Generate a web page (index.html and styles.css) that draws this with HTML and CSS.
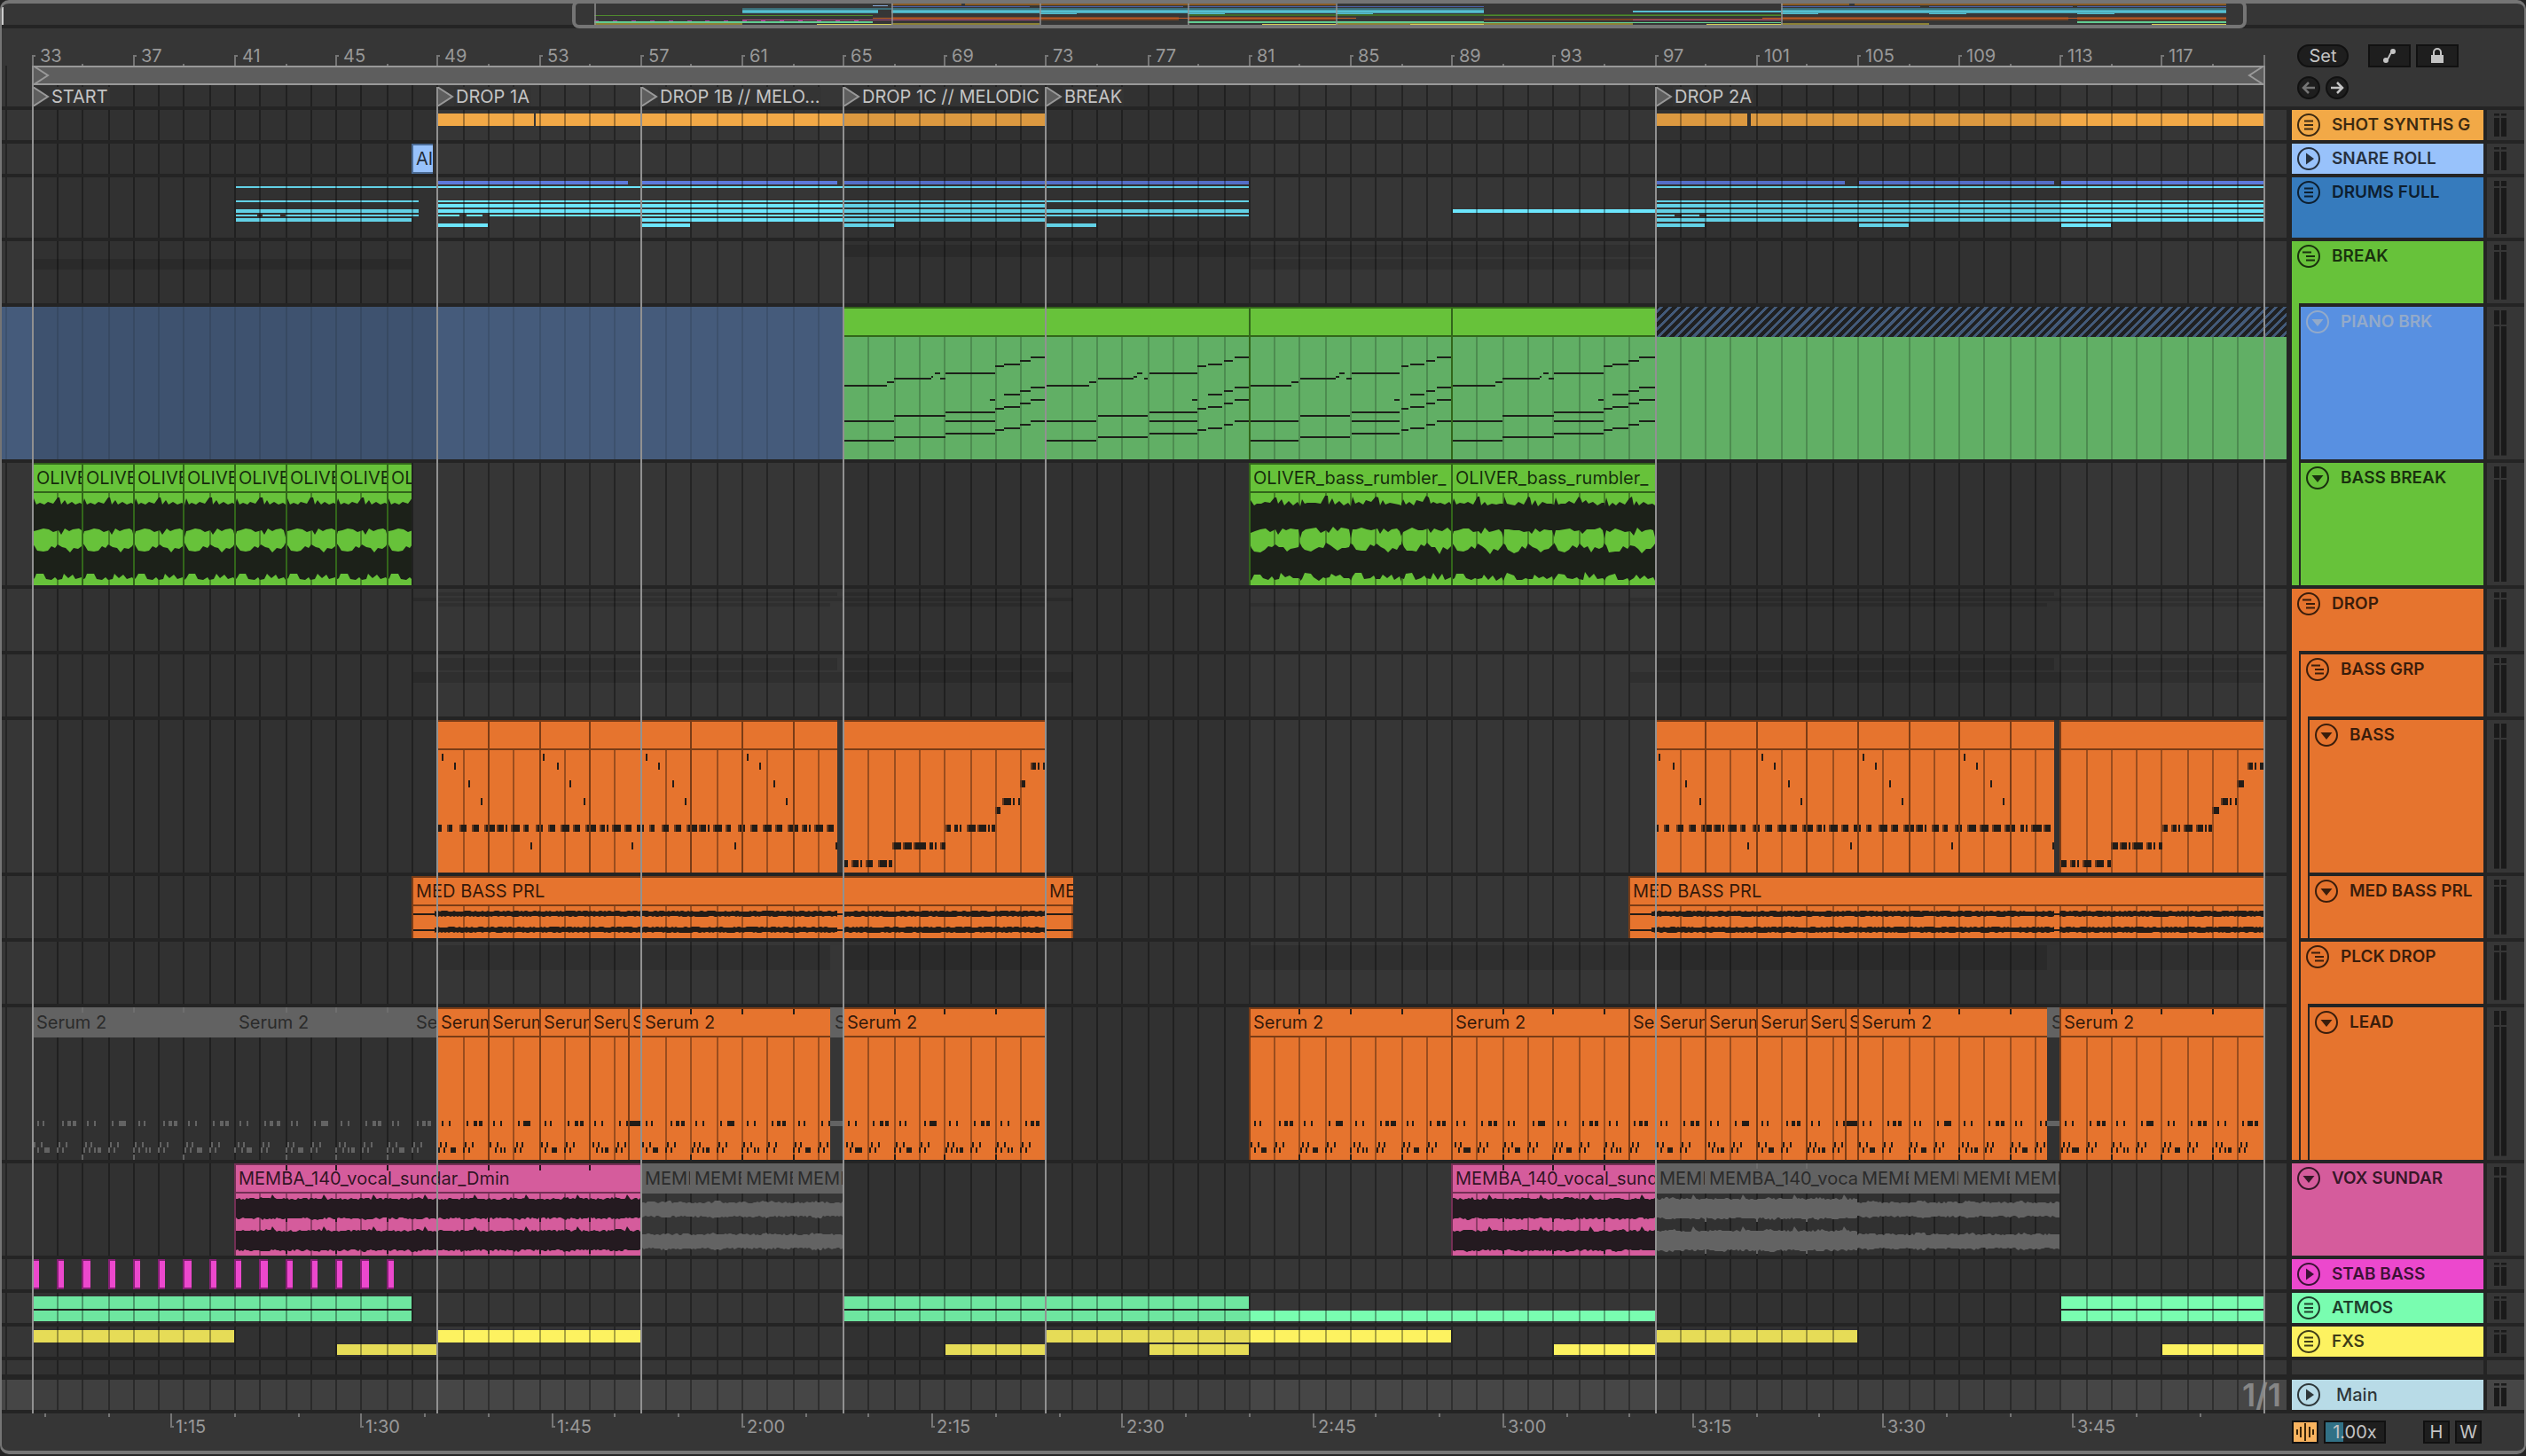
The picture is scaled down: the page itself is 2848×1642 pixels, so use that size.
FILE: index.html
```
<!DOCTYPE html>
<html lang="en">

<head>
    <meta charset="UTF-8">
    <meta name="viewport" content="width=device-width, initial-scale=1.0">
    <link rel="stylesheet" href="styles.css">
    <title>Arrangement</title>
</head>

<body>
    <main class="app">
        <div class="overview" id="overview"></div>

        <div class="top">
            <div class="timeline">
                <div class="ruler" id="ruler"></div>
                <div class="lane loop" id="loop"></div>
                <div class="lane locators" id="locators"></div>
            </div>
            <div class="tools">
                <div class="tool-row">
                    <button type="button" class="pill">Set</button>
                    <button type="button" class="square first" aria-label="Automation mode">
                        <svg width="20" height="20" viewBox="0 0 20 20">
                            <path d="M5 15 C11 15 9 5 15 5" fill="none" stroke="#c4c4c4" stroke-width="2" />
                            <circle cx="6" cy="15" r="3" fill="#c4c4c4" />
                            <circle cx="14" cy="5" r="3" fill="#c4c4c4" />
                        </svg>
                    </button>
                    <button type="button" class="square" aria-label="Lock envelopes">
                        <svg width="20" height="20" viewBox="0 0 20 20">
                            <path d="M6 9 V6 a4 4 0 0 1 8 0 V9" fill="none" stroke="#c4c4c4" stroke-width="2" />
                            <rect x="3" y="9" width="14" height="9" fill="#c4c4c4" />
                        </svg>
                    </button>
                </div>
                <div class="tool-row">
                    <button type="button" class="round off" aria-label="Previous locator">
                        <svg width="18" height="18" viewBox="0 0 18 18">
                            <path d="M16 9 H4 M9 3 L3 9 L9 15" fill="none" stroke="currentColor" stroke-width="2.5" />
                        </svg>
                    </button>
                    <button type="button" class="round" aria-label="Next locator">
                        <svg width="18" height="18" viewBox="0 0 18 18">
                            <path d="M2 9 H14 M9 3 L15 9 L9 15" fill="none" stroke="currentColor" stroke-width="2.5" />
                        </svg>
                    </button>
                </div>
            </div>
        </div>

        <div class="tracks" id="tracks"></div>

        <div class="bottom">
            <div class="times" id="times"></div>
            <div class="zoom">
                <button type="button" class="follow" aria-label="Waveform view">
                    <svg width="26" height="22" viewBox="0 0 26 22">
                        <path d="M4 8 V14 M8 5 V17 M13 1 V21 M18 5 V17 M22 8 V14" stroke="#3a2508" stroke-width="2" />
                    </svg>
                </button>
                <input class="scale" type="text" value="1.00x" aria-label="Waveform zoom">
                <button type="button" class="key first">H</button>
                <button type="button" class="key">W</button>
            </div>
        </div>

        <div class="markers" id="markers"></div>
    </main>

    <script src="script.js"></script>
</body>

</html>
```

FILE: styles.css
```
* {
    box-sizing: border-box;
}

body {
    margin: 0;
    background: #242424;
    color: #989898;
    font-family: Inter, "Liberation Sans", sans-serif;
    font-size: 20px;
}

svg {
    display: block;
}

button,
input {
    font-family: inherit;
    font-size: 20px;
    color: #c4c4c4;
    background: #1e1e1e;
    border: 2px solid #111;
    padding: 0;
    display: flex;
    align-items: center;
    justify-content: center;
}

.app {
    position: relative;
    background: #363636;
    border: solid #757575;
    border-width: 4px 2px;
    border-radius: 10px;
    margin-bottom: 2px;
    overflow: hidden;
}

/* song overview */
.overview {
    position: relative;
    height: 28px;
    border-bottom: 4px solid #242424;
}

.overview::before {
    content: "";
    position: absolute;
    left: 0;
    top: 4px;
    bottom: 0;
    width: 2px;
    background: #ccc;
}

.view-frame {
    position: absolute;
    top: -4px;
    bottom: -4px;
    border: 4px solid #757575;
    border-radius: 8px;
}

/* ruler, loop brace, locators */
.top,
.bottom {
    display: flex;
}

.timeline,
.times {
    flex: 1;
    min-width: 0;
    position: relative;
}

.ruler {
    position: relative;
    height: 42px;
}

.tick-label {
    position: absolute;
    line-height: 20px;
    white-space: nowrap;
}

.ruler .tick-label {
    top: 21px;
}

.times .tick-label {
    top: 5px;
}

.loop {
    height: 22px;
}

.loop-brace {
    position: absolute;
    top: 0;
    bottom: 0;
    background: #5e5e5e;
    border: solid #999;
    border-width: 2px 0;
    display: flex;
    justify-content: space-between;
}

.loop-brace svg {
    margin-top: -2px;
}

.locators {
    height: 24px;
}

.locator {
    position: absolute;
    top: 2px;
    display: flex;
    color: #c4c4c4;
    line-height: 22px;
    white-space: nowrap;
}

.locator span {
    padding: 0 2px;
    background: #343434;
}

.tools,
.zoom {
    width: 268px;
}

.tools {
    padding: 18px 0 0 12px;
}

.tool-row {
    display: flex;
    gap: 6px;
}

.tool-row + .tool-row {
    margin-top: 10px;
}

.pill {
    width: 58px;
    height: 26px;
    border-radius: 13px;
}

.square {
    width: 48px;
    height: 26px;
}

.square.first {
    margin-left: 16px;
}

.round {
    width: 26px;
    height: 26px;
    border-radius: 13px;
}

.off {
    color: #757575;
}

/* track rows */
.track {
    display: flex;
    background: #242424;
}

.lane {
    position: relative;
    flex: 1;
    min-width: 0;
    overflow: hidden;
    background: #363636;
}

.track .lane {
    margin-top: 4px;
}

.grid {
    position: absolute;
    left: 0;
    top: 0;
}

.head-col {
    display: flex;
    width: 216px;
    margin-left: 6px;
}

.strip {
    width: 8px;
    margin-right: 2px;
}

.head {
    flex: 1;
    display: flex;
    align-items: flex-start;
    gap: 13px;
    margin-top: 4px;
    padding: 4px 6px;
    color: rgba(0, 0, 0, 0.75);
    font-size: 19px;
    font-weight: 600;
    line-height: 26px;
    white-space: nowrap;
}

.head.dim {
    color: #93aac9;
}

.head.plain {
    gap: 18px;
    font-size: 20px;
    font-weight: 500;
}

.meter {
    display: flex;
    gap: 2px;
    width: 42px;
    margin: 4px 0 0 4px;
    padding: 4px 8px;
    background: #363636;
}

.meter i {
    width: 6px;
    background: linear-gradient(#1a1a1a, #1a1a1a) 0 0 / 6px 10% no-repeat, linear-gradient(#1a1a1a, #1a1a1a) 0 100% / 6px calc(90% - 2px) no-repeat;
}

.main-track {
    padding-top: 2px;
}

.main-track .lane,
.main-track .meter {
    background: #464646;
}

.frozen {
    background: #455b7b;
}

.quantize {
    position: absolute;
    right: 6px;
    top: 0;
    font-size: 36px;
    font-weight: 600;
    line-height: 34px;
    color: #868686;
}

/* clips */
.clip {
    position: absolute;
    top: 0;
    bottom: 0;
    overflow: hidden;
    background: var(--fill);
    border: solid var(--edge);
    border-width: 2px 0 0 2px;
}

.clip .name {
    position: relative;
    height: 32px;
    padding-left: 3px;
    border-bottom: 2px solid var(--edge);
    color: rgba(0, 0, 0, 0.78);
    line-height: 30px;
    white-space: nowrap;
    overflow: hidden;
}

.clip .name svg {
    position: absolute;
    left: 0;
    top: 0;
}

.clip .body {
    margin-left: -2px;
}

.green {
    --fill: #67c23a;
    --edge: #32661a;
    --ink: #1c2119;
}

.orange {
    --fill: #e6742e;
    --edge: #7a3c16;
    --ink: #231c17;
}

.pink {
    --fill: #d55c9c;
    --edge: #742f55;
    --ink: #241a20;
}

.muted {
    --fill: transparent;
    --edge: transparent;
    --ink: #636363;
    border-width: 0;
}

.muted .name {
    height: 34px;
    line-height: 34px;
    padding-left: 5px;
    background: #626262;
    border: 0;
    color: #2b2b2b;
}

.muted .body {
    margin-left: 0;
}

.snare {
    --fill: #98c2fb;
    --edge: #4b6b95;
    border-width: 2px 0 2px 2px;
}

.snare .name {
    border: 0;
}

.stab {
    --fill: #ec48cd;
    --edge: #861f75;
    border-width: 2px 0 2px 2px;
}

.midi-frozen .body {
    background: #61af65;
}

.hatch {
    position: absolute;
    top: 0;
    height: 34px;
    background: repeating-linear-gradient(135deg, #1f2021 0 4px, #435a79 4px 7px);
}

/* marker lines over all the lanes */
.markers {
    position: absolute;
    top: 0;
    left: 0;
    right: 268px;
    bottom: 42px;
    pointer-events: none;
}

.markers i {
    position: absolute;
    top: 94px;
    bottom: 0;
    width: 2px;
    background: #919191;
}

.markers .edge {
    top: 70px;
}

/* footer */
.bottom {
    height: 46px;
    border-top: 4px solid #242424;
}

.zoom {
    display: flex;
    gap: 6px;
    padding: 8px 0 0 6px;
}

.follow {
    width: 30px;
    height: 26px;
    background: #f8b35f;
}

.scale {
    width: 70px;
    height: 26px;
    text-align: center;
    background: linear-gradient(#317186, #317186) 0 0 / 20px 100% no-repeat #1e1e1e;
}

.key {
    width: 30px;
    height: 26px;
}

.key.first {
    margin-left: 36px;
}
```

FILE: script.js
```
const FIRST_BAR = 31.8;
const BARS = 90.1;
const SAMPLE = "OLIVER_bass_rumbler_";
const VOX = "MEMBA_140_vocal_sundar_Dmin";
let laneWidth = 0;

// bar number to x, kept on the 2px grid
function x(bar) {
    return Math.floor((bar - FIRST_BAR) * laneWidth / BARS / 2) * 2;
}

function rect(left, top, w, h, fill) {
    return `<rect x="${left}" y="${top}" width="${w}" height="${h}" fill="${fill}"/>`;
}

function svg(w, h, inner, cls) {
    return `<svg class="${cls || ""}" width="${w}" height="${h}">${inner}</svg>`;
}

function rand(n) {
    const v = Math.sin(n * 127.1) * 43758.5453;
    return v - Math.floor(v);
}

function gridLines(from, to, h, alpha, origin) {
    let out = "";
    for (let b = Math.ceil(from); b < to; b++) {
        out += rect(x(b) - origin, 0, 2, h, `rgba(0,0,0,${alpha})`);
    }
    return out;
}

// every other block of 16 bars is darker
function shade(h) {
    return [[33, 49], [65, 81], [97, 113]].map(s => rect(x(s[0]), 0, x(s[1]) - x(s[0]), h, "rgba(0,0,0,.09)")).join("");
}

function laneGrid(h, rows, alpha) {
    let out = "";
    (rows || []).forEach(r => {
        r.spans.forEach(s => {
            const left = x(s[0]) + (Number.isInteger(s[0]) ? 2 : 0);
            out += rect(left, r.y, x(s[1]) - left, r.h, r.color);
        });
    });
    return svg(laneWidth, h, out + shade(h) + gridLines(32, 122, h, alpha || 0.33, 0), "grid");
}

/* ---------- notes ---------- */

const pianoNotes = [
    [0, 80, 315], [80, 93, 303], [95, 162, 291], [162, 167, 285], [168, 178, 273], [180, 189, 291], [190, 279, 273],
    [281, 296, 249], [298, 325, 243], [327, 345, 231], [347, 375, 219],
    [270, 279, 363], [298, 325, 345], [327, 345, 333], [347, 375, 321],
    [281, 296, 393], [298, 325, 387], [327, 345, 375], [347, 375, 363],
    [95, 188, 417], [190, 279, 405], [0, 93, 435], [190, 279, 435],
    [281, 296, 465], [298, 325, 459], [327, 345, 447], [347, 375, 435],
    [0, 93, 501], [95, 188, 489], [190, 279, 477]
];

const bassRiff = [
    [0, 10], [21, 33], [49, 65], [76, 92], [104, 127], [131, 147], [150, 154], [163, 182], [190, 202], [217, 233],
    [245, 261], [272, 292], [300, 316], [327, 350], [359, 370], [374, 378], [386, 406], [413, 429], [441, 450]
];

const bassClimb = {
    124: [[0, 13], [21, 33], [37, 41], [49, 68], [76, 96], [103, 111]],
    104: [[111, 127], [131, 147], [150, 154], [158, 182], [190, 201], [205, 209], [217, 225]],
    84: [[225, 237], [245, 256], [260, 264], [273, 292], [299, 315], [319, 323], [327, 335]],
    64: [[335, 350]],
    54: [[354, 370], [374, 378], [386, 390]],
    34: [[391, 405]],
    14: [[413, 426], [429, 433], [441, 449]]
};

function note(bar, endBar, y, h, origin) {
    const left = x(bar);
    const w = Math.max(2, x(endBar) - left);
    let out = rect(left - origin, y, w, h, "var(--ink)");
    if (w > 4 && h === 8) {
        out += rect(left - origin, y, 2, h, "#6b391c");
    }
    return out;
}

function pianoBody(c, o) {
    let out = gridLines(c.s, c.e, 138, 0.2, o);
    for (let b = c.s; b < c.e; b += 8) {
        pianoNotes.forEach(n => {
            out += rect(x(b + n[0] / 46.7) - o, n[2] / 3 - 51, x(b + n[1] / 46.7) - x(b + n[0] / 46.7), 2, "#1c2119");
        });
    }
    return out;
}

function bassBody(c, o) {
    let out = gridLines(c.s + 1, c.e, 138, 0.33, o);
    if (c.climb) {
        Object.keys(bassClimb).forEach(y => {
            bassClimb[y].forEach(n => out += note(c.s + n[0] / 56, c.s + n[1] / 56, Number(y), 8, o));
        });
        return out;
    }
    const start = c.s - (c.s - 1) % 8;
    bassRiff.forEach(n => out += note(start + n[0] / 56, start + n[1] / 56, 84, 8, o));
    [start, start + 4].forEach(b => {
        [[0.2, 4], [0.7, 14], [1.25, 34], [1.75, 54], [3.7, 104]].forEach(n => {
            out += note(b + n[0], b + n[0], n[1], 8, o);
        });
    });
    return out;
}

function leadBody(c, o) {
    let out = c.muted ? "" : gridLines(c.s + 0.5, c.e, 138, 0.33, o);
    if (c.hold) {
        return out + rect(0, 94, 20, 6, "var(--ink)");
    }
    for (let b = Math.floor(c.s) - (Math.floor(c.s) - 1) % 2; b < c.e; b += 2) {
        const tail = (b - 1) % 8 === 2 ? [[80, 96]] : [[80, 88], [92, 100]];
        const low = (b - 1) % 8 === 0 ? [[28, 41]] : [[28, 32], [34, 41]];
        [[12, 15], [26, 30], [66, 69]].concat(tail).forEach(n => out += note(b + n[0] / 56, b + n[1] / 56, 94, 6, o));
        [[6, 9], [19, 22], [61, 64], [76, 79]].forEach(n => out += note(b + n[0] / 56, b + n[1] / 56, 118, 6, o));
        [[1, 4], [14, 17], [57, 60], [69, 72]].concat(low).forEach(n => out += note(b + n[0] / 56, b + n[1] / 56, 124, 6, o));
        if (c.e - c.s > 3 && b > c.s) {
            out += rect(x(b) - o, 132, 2, 6, "var(--ink)");
        }
    }
    return out;
}

/* ---------- waveforms ---------- */

const swell = {
    top1: [0, 14, 3, 6, 8, 13, 14, 11, 22, 13, 28, 10, 38, 12, 46, 5, 50, 5, 53, 13, 59, 8, 64, 13, 72, 10, 80, 13, 88, 11, 93, 13],
    low1: [0, 50, 3, 43, 10, 42, 20, 40, 30, 41, 38, 44, 48, 42, 53, 47, 60, 40, 68, 43, 75, 41, 85, 40, 90, 42, 93, 50],
    top2: [0, 56, 4, 60, 9, 65, 20, 66, 28, 65, 35, 60, 42, 62, 47, 58, 55, 61, 62, 62, 69, 67, 76, 62, 84, 63, 90, 60, 93, 56],
    low2: [0, 98, 4, 96, 8, 91, 20, 91, 25, 97, 35, 98, 42, 95, 46, 98, 54, 97, 58, 91, 66, 96, 74, 92, 80, 97, 90, 95, 93, 98]
};

function swellEdge(list, from, to, o, rough) {
    const pts = [];
    for (let b = from; b < to; b += 2) {
        for (let i = 0; i < list.length; i += 2) {
            const bar = Math.min(b + list[i] / 46.5, to);
            const jag = rough ? Math.round(rand(b * 31 + i) * 4 - 2) : 0;
            pts.push((Math.round((bar - FIRST_BAR) * laneWidth / BARS) - o) + "," + (list[i + 1] + jag));
            if (bar === to) {
                break;
            }
        }
    }
    return pts;
}

function swellBody(c, o) {
    const rough = c.e - c.s > 3;
    let out = gridLines(c.s + 1, c.e, 104, 0.33, o);
    [["top1", "low1"], ["top2", "low2"]].forEach(p => {
        const pts = swellEdge(swell[p[0]], c.s, c.e, o, rough).concat(swellEdge(swell[p[1]], c.s, c.e, o, rough).reverse());
        out += `<polygon points="${pts.join(" ")}" fill="var(--ink)"/>`;
    });
    return out;
}

function noisy(from, to, top, low, jag, o, seed) {
    const a = [];
    const b = [];
    for (let px = from; px <= to; px += 2) {
        const bump = jag > 1 && Math.sin(px / 9) > 0.8 ? 1 : 0;
        a.push((px - o) + "," + (top - Math.round(rand(px + seed) * jag) - bump));
        b.unshift((px - o) + "," + (low + Math.round(rand(px + seed + 7) * jag) + bump));
    }
    return `<polygon points="${a.concat(b).join(" ")}" fill="var(--ink)"/>`;
}

function voxBody(c, o) {
    let out = c.muted ? "" : gridLines(c.s + 1, c.e, 70, 0.33, o);
    const thin = c.thin ? 4 : 0;
    [0, 36].forEach(y => {
        out += noisy(x(c.s), x(c.e), y + 7 + thin, y + 27 - thin / 2, 2, o, y);
    });
    // consonant spikes just before each second bar
    for (let b = c.s; b < c.e && !c.thin; b += 2) {
        [0, 36].forEach(y => {
            const p = x(b + 1.4) - o;
            out += `<polygon points="${p},${y + 8} ${p + 3},${y + 1} ${p + 8},${y + 8}" fill="var(--ink)"/>`;
            out += rect(x(b) - o, y + 26, 2, 6, "var(--ink)");
        });
    }
    return out;
}

function medBody(c, o) {
    let out = gridLines(c.s + 1, c.e, 36, 0.33, o);
    [8, 26].forEach(y => {
        out += rect(0, y, x(c.e) - o, 2, "var(--ink)");
        c.wave.forEach(s => out += noisy(x(s[0]), x(s[1]), y - 2, y + 3, 1, o, y));
    });
    return out;
}

/* ---------- clips ---------- */

function clip(c, track) {
    const left = x(c.s);
    const w = x(c.e) - left;
    const color = c.muted ? "muted" : track.clipColor;
    const bodyH = track.h - 34;
    let ticks = "";
    if (c.ticks) {
        for (let b = c.s + 2; b < c.e; b += 2) {
            ticks += rect(x(b) - left - (c.muted ? 0 : 2), 0, 2, 6, c.muted ? "#6e6e6e" : "var(--ink)");
        }
    }
    let html = `<div class="clip ${color} ${track.extra || ""}" style="left:${left}px;width:${w}px">`;
    if (track.body || c.name) {
        html += `<div class="name">${ticks ? svg(w, 30, ticks) : ""}${c.name || ""}</div>`;
    }
    if (track.body) {
        html += svg(w, bodyH, track.body(c, left), "body");
    }
    return html + "</div>";
}

function bassClips(s) {
    const list = [];
    for (let b = s; b < s + 16; b += 2) {
        list.push({ s: b, e: Math.min(b + 2, s + 15.75) });
    }
    list.push({ s: s + 16, e: s + 24, climb: true });
    return list;
}

function leadClips(s) {
    const n = "Serum 2";
    return [
        { s: s, e: s + 2, name: n }, { s: s + 2, e: s + 4, name: n }, { s: s + 4, e: s + 6, name: n },
        { s: s + 6, e: s + 7.5, name: n }, { s: s + 7.5, e: s + 8, name: n, hold: true },
        { s: s + 8, e: s + 15.5, name: n, ticks: true }, { s: s + 15.5, e: s + 16, name: n, muted: true, hold: true },
        { s: s + 16, e: s + 24, name: n, ticks: true }
    ];
}

function twoBarClips(from, to, props) {
    const list = [];
    for (let b = from; b < to; b += 2) {
        list.push(Object.assign({ s: b, e: Math.min(b + 2, to) }, props));
    }
    return list;
}

const GHOST = "rgba(0,0,0,.13)";
const CYAN = "#6ce6fd";

const tracks = [
    {
        name: "SHOT SYNTHS G", icon: "group", color: "#f2a947", h: 34,
        rows: [{ y: 4, h: 14, color: "#f2a947", spans: [[49, 52.8], [52.9, 73], [97, 100.7], [100.8, 121]] }]
    },
    { name: "SNARE ROLL", icon: "play", color: "#98c2fb", h: 34, clipColor: "snare", clips: [{ s: 48, e: 48.85, name: "AI" }] },
    {
        name: "DRUMS FULL", icon: "group", color: "#367bbd", h: 68,
        rows: [
            { y: 4, h: 4, color: "#5d79dc", spans: [[49, 56.5], [57, 64.75], [65, 81], [97, 104.5], [105, 112.75], [113, 121]] },
            { y: 10, h: 2, color: CYAN, spans: [[41, 81], [97, 121]] },
            { y: 26, h: 2, color: CYAN, spans: [[41, 48.3], [49, 81], [97, 121]] },
            { y: 30, h: 4, color: CYAN, spans: [[49, 73], [97, 121]] },
            { y: 36, h: 4, color: CYAN, spans: [[41, 48.3], [49, 81], [89, 121]] },
            { y: 42, h: 2, color: CYAN, spans: [[41, 41.9], [42.1, 42.8], [43.05, 48.3], [49, 49.9], [50.15, 50.8], [51, 81], [97, 97.8], [98.1, 98.8], [99, 121]] },
            { y: 46, h: 4, color: CYAN, spans: [[41, 48], [57, 73], [97, 121]] },
            { y: 52, h: 4, color: CYAN, spans: [[49, 51], [57, 59], [65, 67], [73, 75], [97, 99], [105, 107], [113, 115]] }
        ]
    },
    {
        name: "BREAK", icon: "fold", color: "#67c23a", h: 70,
        rows: [
            { y: 4, h: 14, color: GHOST, spans: [[65, 97]] },
            { y: 20, h: 12, color: GHOST, spans: [[33, 48], [81, 97]] }
        ]
    },
    {
        name: "PIANO BRK", icon: "open", color: "#5890e1", h: 172, strips: ["#67c23a"], dim: true, frozen: true,
        clipColor: "green", extra: "midi-frozen", body: pianoBody,
        clips: [{ s: 65, e: 81 }, { s: 81, e: 89 }, { s: 89, e: 97 }]
    },
    {
        name: "BASS BREAK", icon: "open", color: "#67c23a", h: 138, strips: ["#67c23a"],
        clipColor: "green", body: swellBody,
        clips: twoBarClips(33, 48, { name: SAMPLE }).concat([{ s: 81, e: 89, name: SAMPLE }, { s: 89, e: 97, name: SAMPLE }])
    },
    {
        name: "DROP", icon: "fold", color: "#e6742e", h: 70,
        rows: [
            { y: 4, h: 4, color: GHOST, spans: [[49, 64.75], [65, 73], [97, 112.75], [113, 121]] },
            { y: 10, h: 4, color: GHOST, spans: [[48, 74.1], [96, 121]] },
            { y: 16, h: 4, color: GHOST, spans: [[49, 64.5], [65, 73], [81, 112.5], [113, 121]] }
        ]
    },
    {
        name: "BASS GRP", icon: "fold", color: "#e6742e", h: 70, strips: ["#e6742e"],
        rows: [
            { y: 4, h: 14, color: GHOST, spans: [[49, 64.75], [65, 73], [97, 112.75], [113, 121]] },
            { y: 20, h: 12, color: GHOST, spans: [[48, 74.1], [96, 121]] }
        ]
    },
    {
        name: "BASS", icon: "open", color: "#e6742e", h: 172, strips: ["#e6742e", "#e6742e"],
        clipColor: "orange", body: bassBody, clips: bassClips(49).concat(bassClips(97))
    },
    {
        name: "MED BASS PRL", icon: "open", color: "#e6742e", h: 70, strips: ["#e6742e", "#e6742e"],
        clipColor: "orange", body: medBody,
        clips: [
            { s: 48, e: 72.95, name: "MED BASS PRL", wave: [[48.9, 64.8], [65, 73]] },
            { s: 73, e: 74.1, name: "MED BASS PRL", wave: [] },
            { s: 96, e: 121, name: "MED BASS PRL", wave: [[96.9, 112.8], [113, 121]] }
        ]
    },
    {
        name: "PLCK DROP", icon: "fold", color: "#e6742e", h: 70, strips: ["#e6742e"],
        rows: [{ y: 4, h: 28, color: GHOST, spans: [[49, 64.5], [65, 73], [81, 112.5], [113, 121]] }]
    },
    {
        name: "LEAD", icon: "open", color: "#e6742e", h: 172, strips: ["#e6742e", "#e6742e"],
        clipColor: "orange", body: leadBody,
        clips: [
            { s: 33, e: 41, name: "Serum 2", muted: true, ticks: true }, { s: 41, e: 48, name: "Serum 2", muted: true, ticks: true },
            { s: 48, e: 49, name: "Serum 2", muted: true }
        ].concat(leadClips(49), [
            { s: 81, e: 89, name: "Serum 2", ticks: true }, { s: 89, e: 96, name: "Serum 2", ticks: true }, { s: 96, e: 97, name: "Serum 2" }
        ], leadClips(97))
    },
    {
        name: "VOX SUNDAR", icon: "open", color: "#d55c9c", h: 104, clipColor: "pink", body: voxBody,
        clips: [{ s: 41, e: 57, name: VOX, ticks: true }].concat(
            twoBarClips(57, 65, { name: VOX, muted: true, thin: true }),
            [
                { s: 89, e: 97, name: VOX, ticks: true }, { s: 97, e: 99, name: VOX, muted: true },
                { s: 99, e: 105, name: VOX, muted: true, ticks: true }
            ],
            twoBarClips(105, 113, { name: VOX, muted: true, thin: true }))
    },
    {
        name: "STAB BASS", icon: "play", color: "#ec48cd", h: 34, clipColor: "stab",
        clips: Array.from({ length: 15 }, (v, i) => ({ s: 33 + i, e: 33.3 + i }))
    },
    {
        name: "ATMOS", icon: "group", color: "#79fdb0", h: 34,
        rows: [
            { y: 4, h: 14, color: "#79fdb0", spans: [[33, 48], [65, 81], [113, 121]] },
            { y: 18, h: 2, color: "#242424", spans: [[33, 48], [65, 81], [113, 121]] },
            { y: 20, h: 12, color: "#79fdb0", spans: [[33, 48], [65, 97], [113, 121]] }
        ]
    },
    {
        name: "FXS", icon: "group", color: "#fdf260", h: 34,
        rows: [
            { y: 4, h: 14, color: "#fdf260", spans: [[33, 41], [49, 57], [73, 89], [97, 105]] },
            { y: 20, h: 12, color: "#fdf260", spans: [[45, 49], [69, 73], [77, 81], [93, 97], [117, 121]] }
        ]
    },
    { h: 16, blank: true },
    { name: "Main", icon: "play", color: "#b8dbe7", h: 34, main: true }
];

const icons = {
    group: '<path d="M8 8.5H18M8 13H18M8 17.5H18" stroke="currentColor" stroke-width="2"/>',
    fold: '<path d="M6 8.5H16M10 13H20M10 17.5H20" stroke="currentColor" stroke-width="2"/>',
    play: '<path d="M10 6.5L19 13L10 19.5Z" fill="currentColor"/>',
    open: '<path d="M6.5 10H19.5L13 18Z" fill="currentColor"/>'
};

function icon(name) {
    return `<svg width="26" height="26" viewBox="0 0 26 26"><circle cx="13" cy="13" r="12" fill="none" stroke="currentColor" stroke-width="2"/>${icons[name]}</svg>`;
}

function trackRow(t) {
    let lane = laneGrid(t.h, t.rows, t.frozen ? 0.11 : 0.33);
    if (t.frozen) {
        const left = x(97);
        const w = laneWidth - left;
        lane += `<div class="clip green midi-frozen" style="left:${left}px;width:${w}px"><div class="name"></div>`
            + svg(w, 138, gridLines(98, 122, 138, 0.2, left), "body") + "</div>"
            + `<div class="hatch" style="left:${left}px;width:${w}px"></div>`;
    }
    lane += (t.clips || []).map(c => clip(c, t)).join("");
    if (t.main) {
        lane += '<span class="quantize">1/1</span>';
    }
    const strips = (t.strips || []).map(c => `<div class="strip" style="background:${c}"></div>`).join("");
    const head = t.blank ? '<div class="head" style="background:#363636"></div>'
        : `<div class="head ${t.dim ? "dim" : ""} ${t.main ? "plain" : ""}" style="background:${t.color}">${icon(t.icon)}<span>${t.name}</span></div>`;
    return `<div class="track ${t.main ? "main-track" : ""}">
        <div class="lane ${t.frozen ? "frozen" : ""}" style="height:${t.h}px">${lane}</div>
        <div class="head-col">${strips}${head}</div>
        <div class="meter">${t.blank ? "" : "<i></i><i></i>"}</div>
    </div>`;
}

function drawRuler() {
    let ticks = "";
    let labels = "";
    for (let b = 33; b <= 121; b += 2) {
        const major = (b - 1) % 4 === 0;
        ticks += rect(x(b), major ? 30 : 40, 2, 12, "#757575");
        if (major && b < 121) {
            ticks += rect(x(b), 30, 4, 2, "#757575");
            labels += `<span class="tick-label" style="left:${x(b) + 9}px">${b}</span>`;
        }
    }
    document.getElementById("ruler").innerHTML = svg(laneWidth, 42, ticks) + labels;
}

function drawTimes() {
    let ticks = "";
    let labels = "";
    for (let sec = 65; sec <= 235; sec += 5) {
        const left = x(sec / 2 + 1);
        const major = sec % 15 === 0;
        ticks += rect(left, 0, 2, major ? 16 : 4, "#757575");
        if (major) {
            ticks += rect(left, 14, 4, 2, "#757575");
            labels += `<span class="tick-label" style="left:${left + 6}px">${Math.floor(sec / 60)}:${String(sec % 60).padStart(2, "0")}</span>`;
        }
    }
    document.getElementById("times").innerHTML = svg(laneWidth, 42, ticks) + labels;
}

function drawLocators() {
    const list = [[33, "START"], [49, "DROP 1A"], [57, "DROP 1B // MELO..."], [65, "DROP 1C // MELODIC"], [73, "BREAK"], [97, "DROP 2A"]];
    const flag = '<svg width="20" height="22"><path d="M1 0L18 11L1 22Z" fill="#5e5e5e" stroke="#999" stroke-width="2"/></svg>';
    document.getElementById("locators").innerHTML = laneGrid(24)
        + list.map(l => `<div class="locator" style="left:${x(l[0])}px">${flag}<span>${l[1]}</span></div>`).join("");
    document.getElementById("markers").innerHTML = list.concat([[121]])
        .map(l => `<i class="${l[0] === 33 || l[0] === 121 ? "edge" : ""}" style="left:${x(l[0])}px"></i>`).join("");
    document.getElementById("loop").innerHTML = laneGrid(22)
        + `<div class="loop-brace" style="left:${x(33)}px;width:${x(121) - x(33) + 2}px">
            <svg width="20" height="22"><path d="M1 0L18 11L1 22" fill="none" stroke="#999" stroke-width="2"/></svg>
            <svg width="20" height="22"><path d="M19 0L2 11L19 22" fill="none" stroke="#999" stroke-width="2"/></svg>
        </div>`;
}

function drawOverview() {
    const el = document.getElementById("overview");
    const unit = el.clientWidth * 0.00735;
    const left = el.clientWidth * 0.2349;
    const ox = bar => Math.round(left + (bar - 33) * unit);
    const rows = [
        [0, 2, "#8a5c26", [[49, 52.8], [53, 73], [97, 100.7], [101, 121]]],
        [2, 1, "#86a9d8", [[48, 48.85]]],
        [3, 1, "#4d62a8", [[49, 56.5], [57, 64.75], [65, 81], [97, 104.5], [105, 112.75], [113, 121]]],
        [5, 2, "#3b6e78", [[41, 81], [97, 121]]],
        [7, 4, "#4aa0ae", [[41, 48.3], [49, 81], [97, 121]]],
        [8, 2, "#56c0d2", [[41, 48.3], [49, 81], [89, 121]]],
        [11, 1, "#56c0d2", [[57, 59], [65, 67], [73, 75], [97, 99], [105, 107], [113, 115]]],
        [12, 2, "#3f6a28", [[65, 97]]],
        [13, 1, "#4f8a2e", [[33, 48], [81, 97]]],
        [15, 4, "#7a4322", [[49, 64.5], [65, 73], [97, 112.5], [113, 121]]],
        [17, 2, "#7a4322", [[81, 97]]],
        [16, 1, "#c8602a", [[48, 74.1], [96, 121]]],
        [18, 1, "#b04c80", [[41, 57], [89, 97]]],
        [20, 2, "#63cc92", [[33, 48], [65, 81], [113, 121]]],
        [21, 1, "#63cc92", [[81, 97]]],
        [22, 2, "#8c8136", [[33, 41], [49, 57], [73, 89], [97, 105]]],
        [23, 1, "#d5cc55", [[45, 49], [69, 73], [77, 81], [93, 97], [117, 121]]]
    ];
    let out = "";
    rows.forEach(r => r[3].forEach(s => out += rect(ox(s[0]), r[0], ox(s[1]) - ox(s[0]), r[1], r[2])));
    for (let b = 33; b < 48; b++) {
        out += rect(ox(b), 19, 5, 1, "#a3419a");
    }
    [33, 49, 57, 65, 73, 97].forEach(b => out += rect(ox(b), 0, 2, 24, "rgba(150,150,150,.7)"));
    el.innerHTML = svg(el.clientWidth, 24, out)
        + `<div class="view-frame" style="left:${ox(31.8)}px;width:${ox(122.1) - ox(31.8)}px"></div>`;
}

function draw() {
    laneWidth = document.getElementById("ruler").clientWidth;
    drawOverview();
    drawRuler();
    drawLocators();
    drawTimes();
    document.getElementById("tracks").innerHTML = tracks.map(trackRow).join("");
}

draw();
window.addEventListener("resize", draw);
```
